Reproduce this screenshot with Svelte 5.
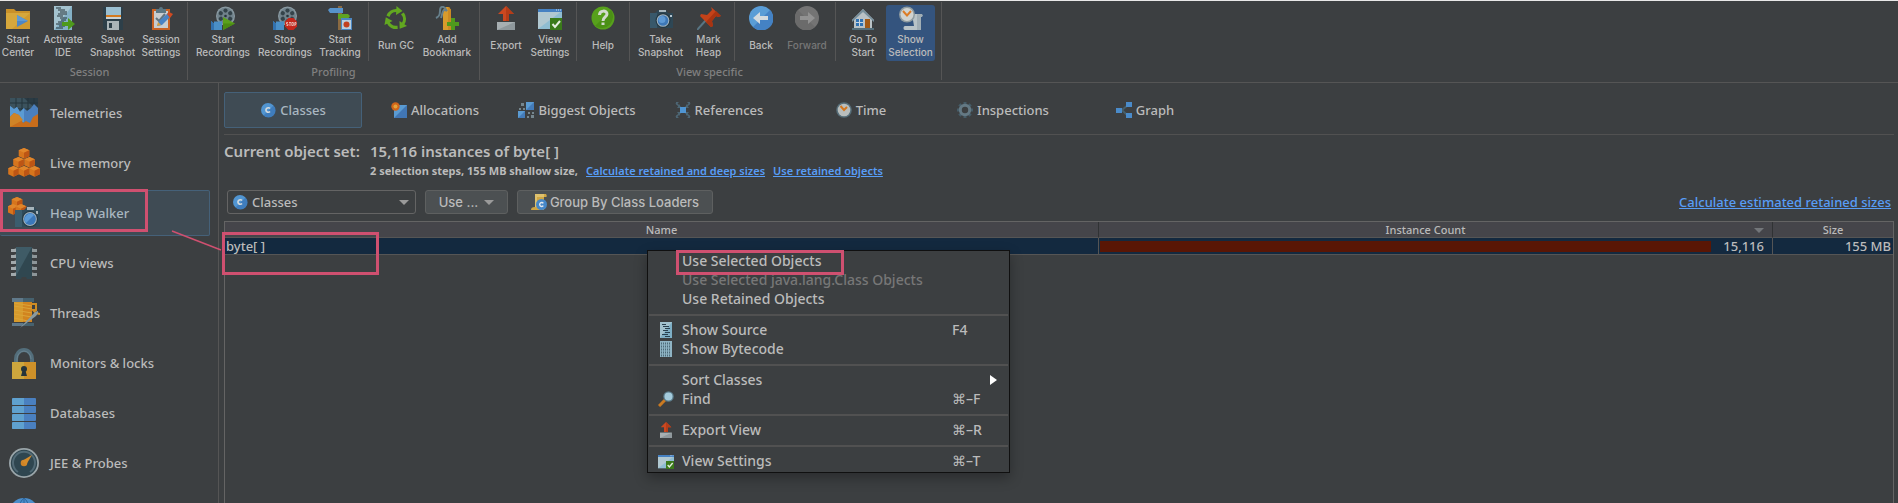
<script>
  const groups = [
    {
      label: 'Session',
      parts: [[
        { icon: 'folder', lines: ['Start', 'Center'], w: 44 },
        { icon: 'ide', lines: ['Activate', 'IDE'], w: 46 },
        { icon: 'save', lines: ['Save', 'Snapshot'], w: 53 },
        { icon: 'clipboard', lines: ['Session', 'Settings'], w: 44 }
      ]]
    },
    {
      label: 'Profiling',
      parts: [
        [
          { icon: 'reelStart', lines: ['Start', 'Recordings'], w: 62 },
          { icon: 'reelStop', lines: ['Stop', 'Recordings'], w: 62 },
          { icon: 'tracking', lines: ['Start', 'Tracking'], w: 48 }
        ],
        [
          { icon: 'gc', lines: ['Run GC'], w: 46 },
          { icon: 'bookmark', lines: ['Add', 'Bookmark'], w: 56 }
        ]
      ]
    },
    {
      label: 'View specific',
      parts: [
        [
          { icon: 'export', lines: ['Export'], w: 44 },
          { icon: 'viewSettings', lines: ['View', 'Settings'], w: 44 }
        ],
        [{ icon: 'help', lines: ['Help'], w: 44 }],
        [
          { icon: 'camera', lines: ['Take', 'Snapshot'], w: 53 },
          { icon: 'pin', lines: ['Mark', 'Heap'], w: 43 }
        ],
        [
          { icon: 'back', lines: ['Back'], w: 44 },
          { icon: 'forward', lines: ['Forward'], w: 48, disabled: true }
        ],
        [
          { icon: 'home', lines: ['Go To', 'Start'], w: 46 },
          { icon: 'selection', lines: ['Show', 'Selection'], w: 49, active: true }
        ]
      ]
    }
  ];

  const views = [
    { icon: 'telemetry', label: 'Telemetries' },
    { icon: 'cubes', label: 'Live memory' },
    { icon: 'heap', label: 'Heap Walker', active: true },
    { icon: 'cpu', label: 'CPU views' },
    { icon: 'thread', label: 'Threads' },
    { icon: 'lock', label: 'Monitors & locks' },
    { icon: 'database', label: 'Databases' },
    { icon: 'gauge', label: 'JEE & Probes' },
    { icon: 'globe', label: '' }
  ];

  const tabs = [
    { icon: 'class', label: 'Classes', active: true },
    { icon: 'alloc', label: 'Allocations' },
    { icon: 'biggest', label: 'Biggest Objects' },
    { icon: 'refs', label: 'References' },
    { icon: 'clock', label: 'Time' },
    { icon: 'gear', label: 'Inspections' },
    { icon: 'graph', label: 'Graph' }
  ];

  const menu = [
    [
      { label: 'Use Selected Objects' },
      { label: 'Use Selected java.lang.Class Objects', disabled: true },
      { label: 'Use Retained Objects' }
    ],
    [
      { label: 'Show Source', icon: 'source', key: 'F4' },
      { label: 'Show Bytecode', icon: 'bytecode' }
    ],
    [
      { label: 'Sort Classes', sub: true },
      { label: 'Find', icon: 'find', key: '⌘–F' }
    ],
    [{ label: 'Export View', icon: 'export', key: '⌘–R' }],
    [{ label: 'View Settings', icon: 'viewSettings', key: '⌘–T' }]
  ];

  const cubeSpots = [[16, 1], [10.5, 10], [21.5, 10], [5.5, 19], [16, 19], [26.5, 19]];
  const pins = [3, 9, 15, 21, 27];
</script>

{#snippet reel()}
  <circle cx="14.500" cy="10" r="9.500" fill="#8b9ba3" />
  <circle cx="14.500" cy="10" r="8.300" fill="#70828b" />
  {#each [0, 60, 120, 180, 240, 300] as a}
    <circle cx="14.500" cy="4.600" r="2.100" fill="#34434a" transform="rotate({a} 14.500 10)" />
  {/each}
  <circle cx="14.500" cy="10" r="1.300" fill="#26343b" />
  <path d="M0 15l3 2.500V15.500h8V24H0z" fill="#4a8fc7" />
  <path d="M0 15l3 2.500V24H0z" fill="#3271ae" />
{/snippet}

{#snippet cube(x, y)}
  <g transform="translate({x} {y})">
    <path d="M0 0l5.300 2.300v6L0 10.800l-5.300-2.500v-6z" fill="#d6751d" />
    <path d="M0 0l5.300 2.300L0 4.800l-5.300-2.500z" fill="#e0862b" />
    <path d="M0 4.800l5.300-2.500v6L0 10.800z" fill="#bd5514" />
  </g>
{/snippet}

{#snippet icon(name, size)}
  {@const big = ['telemetry', 'cubes', 'heap', 'cpu', 'thread', 'lock', 'database', 'gauge', 'globe'].includes(name)}
  {@const small = ['class', 'alloc', 'biggest', 'refs', 'clock', 'gear', 'graph', 'source', 'bytecode', 'find', 'scroll'].includes(name)}
  {@const box = big ? 32 : small ? 16 : 24}
  <svg class="icon" width={size} height={size} viewBox="0 0 {box} {box}" aria-hidden="true">
    {#if name === 'folder'}
      <path d="M0 3h8l2 2h14v18H0z" fill="#c9912a" />
      <path d="M0 7h24v16H0z" fill="#d09a2e" />
      <path d="M0 7h24L6 23H0z" fill="#d6a73c" />
      <path d="M11 9l11 6-11 6z" fill="#4e86c4" />
      <path d="M11 9l11 6H11z" fill="#5f9bd3" />
    {:else if name === 'ide'}
      <path d="M3 0h18v24H3z" fill="#84b1c6" />
      <path d="M3 0h18L3 24z" fill="#a4c3cf" />
      <path d="M5 2h5M7 4h7M9 6h7M7 8h9M6 10h6M9 12h7M10 14h5M7 16h6M5 18h6M8 20h6M5 22h7" stroke="#27343b" stroke-width="1" />
      <path d="M11 16h6v-4l7 6-7 6v-4h-6z" fill="#4e9a1c" />
    {:else if name === 'save'}
      <path d="M2 1h20v23H4l-2-2z" fill="#2d3f49" />
      <path d="M5 1h15v12H5z" fill="#cbd3d6" />
      <path d="M5 1h15v8H5z" fill="#9bbfd1" />
      <path d="M5 9h15v2H5z" fill="#d47a1f" />
      <path d="M6 15h12v9H6z" fill="#aab4b8" />
      <path d="M8 17h3v5H8z" fill="#2d3f49" />
    {:else if name === 'clipboard'}
      <path d="M3 3h18v21H3z" fill="#c96324" />
      <path d="M5 5h14v17H5z" fill="#c8cdcf" />
      <path d="M7 3h3a2 2 0 0 1 4 0h3v4H7z" fill="#5c7885" />
      <path d="M7 12l3 3 6-7" stroke="#61757f" stroke-width="2" fill="none" />
      <path d="M8 20l2-5 9-8 3 3-9 9z" fill="#4a83c3" />
      <path d="M18 8l2-2 4 2-3 4z" fill="#cf4a22" />
      <path d="M8 20l1-4 3 3z" fill="#dca23a" />
    {:else if name === 'reelStart'}
      {@render reel()}
      <path d="M12 11l12 6.500L12 24z" fill="#5ba11d" /><path d="M12 17.500h12L12 24z" fill="#4b8c13" />
    {:else if name === 'reelStop'}
      {@render reel()}
      <path d="M15.500 12h5l3.500 3.500v5L20.500 24h-5L12 20.500v-5z" fill="#c5271c" />
      <path d="M15 16.500h-1.500v1.500H15v1.500h-1.500M16 16.500h2M17 16.500v3.500M18.800 16.500h1.500v3h-1.500zM21.800 20v-3.500H23v1.800h-1" stroke="#e8cfcb" stroke-width=".8" fill="none" />
    {:else if name === 'tracking'}
      <path d="M10 0h4v24h-4z" fill="#8b6a41" />
      <path d="M0 4l2-2h13v5H2z" fill="#5793cb" />
      <path d="M10 8h10l2 2-2 3H10z" fill="#5fa322" />
      <path d="M13 12h11v12H13z" fill="#4c87c2" /><path d="M14 14h9v9h-9z" fill="#b9cedd" />
      <circle cx="18.500" cy="18.500" r="3" fill="#c2401e" />
    {:else if name === 'gc'}
      <g fill="#62a820">
        {#each [0, 120, 240] as a}
          <g transform="rotate({a} 12 13)">
            <path d="M2.500 9.500A10.200 10.200 0 0 1 13 3l.3 3A7.300 7.300 0 0 0 5.500 11z" />
            <path d="M12.500 0l6 5-6.500 4z" />
          </g>
        {/each}
      </g>
    {:else if name === 'bookmark'}
      <path d="M8 4l3-3h3l2 3v20H8z" fill="#d89b2c" /><path d="M13 1h1l2 3v20h-3z" fill="#cb8a24" />
      <path d="M12 5C9-1 5 0 5 5s-2 6-4 7M12 5C7 2 8 7 6 12" stroke="#67808c" stroke-width="2" fill="none" />
      <path d="M12 16h4v-4h4v4h4v4h-4v4h-4v-4h-4z" fill="#4f9a1d" />
    {:else if name === 'export'}
      <path d="M12 0l8 8h-5v7H9V8H4z" fill="#cb4820" /><path d="M12 0l8 8h-5v7h-3z" fill="#b53c18" />
      <path d="M3 16h18v8H3z" fill="#8f989c" /><path d="M3 16h18l-9 4-9 4z" fill="#a7afb2" />
    {:else if name === 'viewSettings'}
      <path d="M0 3h24v20H0z" fill="#8fbdd2" /><path d="M0 5h24L0 23z" fill="#b1c8d1" />
      <path d="M0 3h24v3H0z" fill="#4681c2" /><path d="M18 4h1M20 4h1M22 4h1" stroke="#cfe0ee" />
      <path d="M12 12h12v12H12z" fill="#3a7a1a" /><path d="M14.500 18l2.500 3 5-6" stroke="#e5eee0" stroke-width="2" fill="none" />
    {:else if name === 'help'}
      <circle cx="12" cy="12" r="11.500" fill="#57a01c" /><path d="M20 4A11.500 11.500 0 0 1 4 20z" fill="#4b9015" />
      <path d="M8.500 9c0-5 7.500-5 7.500-1 0 3-4 3-4 7" stroke="#d3dace" stroke-width="3" fill="none" /><path d="M10.500 16.500h3v2.500h-3z" fill="#d3dace" />
    {:else if name === 'camera'}
      <path d="M1 7h5l3-3h8l2 3h5v15H1z" fill="#2e4755" /><path d="M1 7h7v15H1z" fill="#38586a" />
      <path d="M10 4h7v2h-7z" fill="#a8b8c0" />
      <circle cx="14" cy="14.500" r="7.500" fill="#243842" /><circle cx="14" cy="14.500" r="6.300" fill="#a4b6c0" /><circle cx="14" cy="14.500" r="5.300" fill="#3d78b7" /><circle cx="13" cy="13.500" r="3.500" fill="#5e9ad5" />
      <path d="M21 9h2v2h-2z" fill="#b6c6cf" />
    {:else if name === 'pin'}
      <path d="M9 14L0 24" stroke="#587583" stroke-width="2" />
      <path d="M14 1l10 9-3 1-2-1-4 5 1 5-2 1L3 10l1-2 6 1 5-5z" fill="#c54219" />
      <path d="M19 5l5 5-3 1-2-1-4 5 1 5-2 1-5-5z" fill="#a93411" />
    {:else if name === 'back' || name === 'forward'}
      <g transform={name === 'forward' ? 'translate(24 0) scale(-1 1)' : undefined}>
        <circle cx="12" cy="12" r="12" fill={name === 'back' ? '#5a9dd6' : '#747474'} />
        <path d="M21 4A12 12 0 0 1 4 21z" fill={name === 'back' ? '#4482c4' : '#6b6b6b'} />
        <path d="M4 12l7-6v4h8v4h-8v4z" fill={name === 'back' ? '#d3dade' : '#929292'} />
      </g>
    {:else if name === 'home'}
      <path d="M12 3L1 14h2v9h18v-9h2z" fill="#b9c2c6" /><path d="M12 3L1 14v2L12 6l11 10v-2z" fill="#78909c" />
      <path d="M5 13h7v7H5z" fill="#2f72b3" /><path d="M8.500 13v7M5 16.500h7" stroke="#c9d6df" />
      <path d="M14 13h5v10h-5z" fill="#a15a16" /><path d="M1 22h22v2H1z" fill="#55707d" />
    {:else if name === 'selection'}
      <path d="M13 8h9c2 0 2 3 0 3v13H6c-2 0-2-4 0-4h9z" fill="#b9c3c7" /><path d="M18 8h4c2 0 2 3 0 3v13h-4z" fill="#a1aeb5" />
      <circle cx="8" cy="8.500" r="8" fill="#8f9b9f" /><circle cx="8" cy="8.500" r="6.500" fill="#d0d3d1" />
      <path d="M4 5l4 4.500L12 5" stroke="#dc7c26" stroke-width="2" fill="none" />
    {:else if name === 'telemetry'}
      <path d="M2 1h28v29H2z" fill="#3b525d" /><path d="M16 1h14v13z" fill="#2a3b44" />
      <path d="M2 6h28M2 12h28M8 1v15M14 1v15M20 1v15M26 1v15" stroke="#25353d" />
      <path d="M2 9l4 3 3-2 3 5 4-4 3 3 4-3 3-4 4 4v15H2z" fill="#4a7fbd" /><path d="M2 9l4 3 3-2 3 5 4-4v14H2z" fill="#5b9bd3" />
      <path d="M2 20l4-4 5 2 4 8 3-2 4 2 3-6 5-3v12a1 1 0 0 1-1 1H3a1 1 0 0 1-1-1z" fill="#c86d1b" /><path d="M2 20l4-4 5 2 4 5-13 7z" fill="#cf8427" />
    {:else if name === 'cubes'}
      {#each cubeSpots as [x, y]}{@render cube(x, y)}{/each}
    {:else if name === 'heap'}
      {@render cube(9, 0)}{@render cube(5, 7)}{@render cube(13, 7)}
      <path d="M7 13h9l3-3h7l3 3h3v17H7z" fill="#2f4b5a" /><path d="M7 13h7v17H7z" fill="#3b5d6e" />
      <path d="M19 10h7v3h-7z" fill="#a6b4bb" /><path d="M28 14h2v3h-2z" fill="#a6b4bb" />
      <circle cx="22" cy="22" r="8" fill="#243944" /><circle cx="22" cy="22" r="6.900" fill="#a0b1ba" /><circle cx="22" cy="22" r="5.900" fill="#3b78ba" /><path d="M18 26a5.700 5.700 0 0 1 8-8z" fill="#5a9ad7" />
    {:else if name === 'cpu'}
      {#each pins as y}
        <path d="M3 {y - 1}h3l3-1v4H6V{y + 2}H3z" fill="#a1a9ac" /><path d="M29 {y - 1}h-3l-3-1v4h3V{y + 2}h3z" fill="#8d9699" />
      {/each}
      <path d="M8 0h16v32h-5l-1-2h-4l-1 2H8z" fill="#304750" /><path d="M8 0h16L8 29z" fill="#3f5b66" />
    {:else if name === 'thread'}
      <path d="M4 1h22v4H4zM4 26h22v3H4z" fill="#46616e" /><path d="M4 1h11v4H4zM4 26h11v3H4z" fill="#60798a" />
      <path d="M6 5h18v20H6z" fill="#d1841f" /><path d="M6 5h9v20H6z" fill="#d69a2c" />
      <path d="M6 9l18 3M6 13l18 3M6 17l18 3M6 21l14 3M6 6l18 3" stroke="#dba438" />
      <path d="M24 7h4v6h-3l3 3 4 1" stroke="#ce8c24" stroke-width="2" fill="none" />
      <path d="M12 31l15-16 3-1v2l-2 3z" fill="#89999f" />
    {:else if name === 'lock'}
      <path d="M8 17v-5a8 9 0 0 1 16 0v5" stroke="#536e7b" stroke-width="4" fill="none" /><path d="M9 17v-5a7 8 0 0 1 14 0" stroke="#6b8491" stroke-width="1" fill="none" />
      <path d="M4 15h24v17H4z" fill="#cf9129" /><path d="M4 15h12v17H4z" fill="#cda63d" />
      <circle cx="16" cy="22" r="3" fill="#26343a" /><path d="M15 22h2l2 7h-6z" fill="#26343a" />
    {:else if name === 'database'}
      {#each [1, 9, 17, 25] as y}
        <rect x="4" y={y} width="24" height="7" rx="1" fill="#4a80c0" /><path d="M5 {y}h11v7H5a1 1 0 0 1-1-1V{y + 1}z" fill="#5fa1cf" />
      {/each}
    {:else if name === 'gauge'}
      <circle cx="16" cy="16" r="15" fill="#9aa5a9" /><circle cx="16" cy="16" r="13.200" fill="#2f4650" />
      <path d="M10 25a11 11 0 1 1 12 0" stroke="#526a76" stroke-width="2" fill="none" />
      <circle cx="16" cy="16" r="3.300" fill="#cf8426" /><path d="M14 14l10-6-6 10z" fill="#d68c2a" />
    {:else if name === 'globe'}
      <circle cx="16" cy="16" r="15" fill="#4b8dca" /><path d="M16 1v30M5 6c6 4 16 4 22 0M1 16h30M16 1C8 8 8 24 16 31M16 1c8 7 8 23 0 30" stroke="#2c639a" fill="none" />
    {:else if name === 'class'}
      <circle cx="8" cy="8" r="7" fill="#5195d1" /><path d="M13.500 3.500A7 7 0 0 1 3.500 13.500z" fill="#3f7dbd" />
      <path d="M10 6.500A2.300 2.300 0 1 0 10 9.500" stroke="#d3dade" stroke-width="1.600" fill="none" />
    {:else if name === 'alloc'}
      <path d="M3 3h13v13H3z" fill="#4176b4" /><path d="M3 3h13L3 16z" fill="#5a9bd2" />
      <circle cx="4.500" cy="4.500" r="4.200" fill="#d2661a" /><circle cx="4.500" cy="4.500" r="2" fill="#e5a53c" />
    {:else if name === 'biggest'}
      <path d="M8 0h8v8H8zM0 9h7v7H0z" fill="#447cba" /><path d="M8 0h8L8 8zM0 9h7l-7 7z" fill="#5b9bd2" />
      <path d="M3 1h3v3H3zM1 6h2v2H1zM5 6h2v2H5zM10 10h2v2h-2zM14 10h2v2h-2zM9 14h2v2H9zM13 13h3v3h-3z" fill="#75868e" />
    {:else if name === 'refs'}
      <path d="M1 1l5 5M15 1l-5 5M1 15l5-5M15 15l-5-5" stroke="#4d6674" stroke-width="1.500" />
      <path d="M5 6H2l3-4zM11 6h3l-3-4zM5 10H2l3 4zM11 10h3l-3 4z" fill="#4d6674" />
      <path d="M1 0h3L1 3zM15 0h-3l3 3zM1 16h3l-3-3zM15 16h-3l3-3z" fill="#4d6674" />
      <path d="M5 5h6v6H5z" fill="#4f95d3" />
    {:else if name === 'clock'}
      <circle cx="8" cy="8" r="7.800" fill="#566e79" /><circle cx="8" cy="8" r="6.300" fill="#b9bebd" /><path d="M4.500 4l3.500 4 3-3" stroke="#d3761d" stroke-width="2" fill="none" />
    {:else if name === 'gear'}
      {#each [0, 45, 90, 135, 180, 225, 270, 315] as a}<path d="M6.500 0h3v4h-3z" fill="#455c68" transform="rotate({a} 8 8)" />{/each}
      <circle cx="8" cy="8" r="4.700" stroke="#64798400" stroke-width="3" fill="none" />
      <circle cx="8" cy="8" r="4.700" stroke="#647984" stroke-width="3" fill="none" />
    {:else if name === 'graph'}
      <path d="M6 8l6-5M6 8l6 6" stroke="#455f6c" stroke-width="2" /><path d="M0 6h6v5H0zM10 0h6v5h-6zM10 11h6v5h-6z" fill="#4a8bca" />
    {:else if name === 'source'}
      <path d="M2 0h12v16H2z" fill="#7daec5" /><path d="M2 0h12L2 16z" fill="#a2c2cf" />
      <path d="M4 2.500h4M5 4.500h6M7 6.500h5M5 8.500h5M7 10.500h5M4 12.500h6M7 14.500h5" stroke="#294150" />
    {:else if name === 'bytecode'}
      <path d="M2 0h12v16H2z" fill="#8fb4c4" /><path d="M3 2.500h10M3 5.500h10M3 8.500h10M3 11.500h10M3 14.500h10" stroke="#4d6b79" stroke-width="2" stroke-dasharray="1 1" />
    {:else if name === 'find'}
      <path d="M7 9L1 15" stroke="#c97a22" stroke-width="3" /><circle cx="10.500" cy="5.500" r="5.300" fill="#5a7987" /><circle cx="10.500" cy="5.500" r="4" fill="#a4cbdc" />
    {:else if name === 'scroll'}
      <path d="M4 0h11c1 1 1 3 0 3h-2v13H0c0-2 1-3 4-3z" fill="#d0a644" /><path d="M4 0h9v3H6v10H4z" fill="#dec16d" />
      <circle cx="10.500" cy="10.500" r="5.500" fill="#4688c8" /><path d="M12.300 9.300a2 2 0 1 0 0 2.400" stroke="#e4e9ed" stroke-width="1.400" fill="none" />
    {/if}
  </svg>
{/snippet}

<div class="app">
  <header class="toolbar">
    {#each groups as g}
      <section class="group">
        <div class="parts">
          {#each g.parts as part}
            <div class="part">
              {#each part as b}
                <button class="tool" class:active={b.active} disabled={b.disabled} style="width:{b.w}px">
                  {@render icon(b.icon, 24)}
                  <span class="tool-label">{#each b.lines as l}<span>{l}</span>{/each}</span>
                </button>
              {/each}
            </div>
          {/each}
        </div>
        <div class="group-label">{g.label}</div>
      </section>
    {/each}
  </header>

  <div class="body">
    <nav class="sidebar">
      {#each views as v}
        <button class="view" class:active={v.active} aria-label={v.label || v.icon}>{@render icon(v.icon, 32)}<span>{v.label}</span></button>
      {/each}
    </nav>

    <main>
      <div class="tabs">
        {#each tabs as t}
          <button class="tab" class:active={t.active}>{@render icon(t.icon, 16)}<span>{t.label}</span></button>
        {/each}
      </div>

      <div class="summary">
        <strong class="title">Current object set:</strong>
        <strong class="title">15,116 instances of byte[ ]</strong>
        <div class="steps">
          <span>2 selection steps, 155 MB shallow size,</span>
          <a href="#deep">Calculate retained and deep sizes</a>
          <a href="#retained">Use retained objects</a>
        </div>
      </div>

      <div class="controls">
        <label class="combo">
          {@render icon('class', 16)}
          <select aria-label="Grouping"><option>Classes</option></select>
          <i class="caret"></i>
        </label>
        <button class="btn use">Use ... <i class="caret"></i></button>
        <button class="btn loaders">{@render icon('scroll', 16)}Group By Class Loaders</button>
        <a class="estimate" href="#estimated">Calculate estimated retained sizes</a>
      </div>

      <div class="table-box">
        <table>
          <colgroup><col class="c-name" /><col /><col class="c-size" /></colgroup>
          <thead>
            <tr><th>Name</th><th class="sorted">Instance Count<i class="caret sort"></i></th><th>Size</th></tr>
          </thead>
          <tbody>
            <tr>
              <td>byte[ ]</td>
              <td><div class="count"><span class="bar"></span><span>15,116</span></div></td>
              <td class="num">155 MB</td>
            </tr>
          </tbody>
        </table>
      </div>
    </main>
  </div>

  <div class="menu" role="menu">
    {#each menu as section}
      <div class="menu-section">
        {#each section as m}
          <button class="item" role="menuitem" disabled={m.disabled}>
            <span class="slot">{#if m.icon}{@render icon(m.icon, 16)}{/if}</span>
            <span class="item-label">{m.label}</span>
            {#if m.key}<span class="key">{m.key}</span>{/if}
            {#if m.sub}<i class="arrow"></i>{/if}
          </button>
        {/each}
      </div>
    {/each}
  </div>

  <div class="mark mark-view"></div>
  <div class="mark mark-row"></div>
  <div class="mark mark-item"></div>
  <svg class="link-line" width="52" height="22" aria-hidden="true"><path d="M1 1l49 19" stroke="#cf5070" stroke-width="1.500" /></svg>
</div>

<style>
  :global(body) { background: #3c3f41; overflow: hidden; }
  .app {
    position: relative;
    display: flex;
    flex-direction: column;
    height: 100vh;
    box-sizing: border-box;
    overflow: hidden;
    border-top: 1px solid #e8e8e8;
    background: #3c3f41;
    color: #bbbbbb;
    font: 500 13px/18px "Noto Sans", "Open Sans", sans-serif;
  }
  .app :global(*) { box-sizing: border-box; }
  button { font: inherit; color: inherit; background: none; border: 0; padding: 0; margin: 0; }
  .icon { display: block; flex: none; }
  a { color: #589df6; text-decoration: underline; }

  .toolbar { display: flex; flex: none; height: 82px; padding-top: 1px; border-bottom: 1px solid #555555; }
  .group { display: flex; flex-direction: column; height: 78px; padding-right: 4px; border-right: 1px solid #555555; }
  .group:first-child { margin-left: -4px; }
  .group:not(:first-child) { padding-left: 4px; }
  .group:last-child { padding-right: 6px; }
  .parts { display: flex; height: 60px; }
  .part { display: flex; }
  .part + .part { margin-left: 4px; padding-left: 4px; border-left: 1px solid #555555; }
  .tool { display: flex; flex-direction: column; align-items: center; height: 56px; margin-top: 3px; padding-top: 1px; border-radius: 3px; }
  .tool.active { background: #34547e; }
  .tool:disabled { color: #777777; }
  .tool-label { display: flex; flex: 1; flex-direction: column; justify-content: center; font: 500 10px/13px Inter, "Liberation Sans", sans-serif; white-space: nowrap; text-align: center; }
  .group-label { text-align: center; color: #808080; font-size: 11px; line-height: 22px; }

  .body { display: flex; flex: 1; min-height: 0; }
  .sidebar { display: flex; flex: none; flex-direction: column; gap: 4px; width: 219px; padding: 7px 8px 0 0; border-right: 1px solid #555555; overflow: hidden; }
  .view { display: flex; flex: none; align-items: center; gap: 10px; height: 46px; padding-left: 8px; border: 1px solid transparent; border-left: 0; border-radius: 2px; }
  .view.active, .tab.active { background: #3f4b54; border-color: #456179; color: #a9b7c1; }

  main { display: flex; flex: 1; flex-direction: column; min-width: 0; padding: 9px 4px 0 5px; }
  .tabs { display: flex; gap: 4px; padding-bottom: 6px; border-bottom: 1px solid #515151; }
  .tab { display: flex; align-items: center; justify-content: center; gap: 4px; width: 138px; height: 36px; border: 1px solid transparent; border-radius: 2px; }
  .summary { display: grid; grid-template-columns: 138px 1fr; column-gap: 8px; padding-top: 6px; }
  .title { font-weight: 600; font-size: 15px; line-height: 20px; white-space: nowrap; }
  .steps { display: flex; grid-column: 2; gap: 8px; font-size: 11px; font-weight: 700; line-height: 20px; }
  .steps a { font-weight: 600; }

  .controls { display: flex; align-items: center; gap: 9px; padding: 9px 3px 7px; }
  .combo { display: flex; align-items: center; gap: 4px; width: 189px; height: 24px; padding: 0 6px 0 4px; border: 1px solid #646464; border-radius: 3px; }
  select { flex: 1; appearance: none; padding: 0; border: 0; background: none; color: inherit; font: inherit; }
  .caret { flex: none; width: 0; height: 0; border: 5px solid transparent; border-top-color: #9a9a9a; border-bottom: 0; }
  .btn { display: flex; align-items: center; justify-content: center; height: 24px; background: #4c5052; border: 1px solid #5e6060; border-radius: 3px; font: 500 13px/18px Inter, "Liberation Sans", sans-serif; white-space: nowrap; }
  .use { gap: 6px; width: 83px; }
  .loaders { gap: 3px; width: 196px; }
  .estimate { margin-left: auto; }

  .table-box { flex: 1; border: 1px solid #646464; border-bottom: 0; }
  table { width: 100%; table-layout: fixed; border-collapse: separate; border-spacing: 0; }
  .c-name { width: 52.4%; }
  .c-size { width: 120px; }
  th { position: relative; height: 16px; padding: 0; background: #45454a; border-bottom: 1px solid #555555; border-right: 1px solid #303234; font-size: 11px; font-weight: 500; line-height: 14px; }
  th.sorted { padding-right: 20px; }
  td { height: 17px; padding: 0 2px 0 1px; background: #13293f; border-right: 1px solid #555555; border-bottom: 1px solid #555555; line-height: 16px; }
  td:last-child, th:last-child { border-right: 0; }
  .sort { position: absolute; right: 8px; top: 6px; border-top-color: #73767a; }
  .count { display: flex; align-items: center; justify-content: space-between; padding-right: 6px; }
  .bar { width: 92%; height: 11px; background: #591605; }
  .num { text-align: right; }

  .menu { position: absolute; left: 647px; top: 249px; width: 363px; padding: 1px; background: #3c3f41; border: 1px solid #101010; box-shadow: 0 5px 12px rgba(0, 0, 0, .3); font-size: 14px; }
  .menu-section + .menu-section { padding-top: 5px; margin-top: 5px; border-top: 2px solid #515151; }
  .item { display: flex; align-items: center; width: 100%; height: 19px; padding: 0 0 2px 9px; font-size: 14px; line-height: 17px; text-align: left; }
  .item:disabled { color: #777777; }
  .slot { width: 24px; flex: none; }
  .item-label { flex: 1; white-space: nowrap; }
  .key { width: 56px; }
  .arrow { margin-right: 11px; width: 0; height: 0; border: 5px solid transparent; border-left: 7px solid #ffffff; border-right: 0; }

  .mark { position: absolute; border: 3px solid #cf5070; pointer-events: none; }
  .mark-view { left: 0; top: 188px; width: 148px; height: 43px; }
  .mark-row { left: 222px; top: 231px; width: 157px; height: 43px; }
  .mark-item { left: 676px; top: 249px; width: 168px; height: 25px; }
  .link-line { position: absolute; left: 171px; top: 229px; }
</style>
